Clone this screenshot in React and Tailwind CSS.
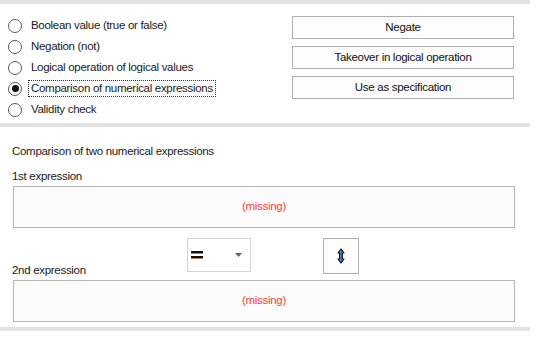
import { useState } from "react";

const options = [
  "Boolean value (true or false)",
  "Negation (not)",
  "Logical operation of logical values",
  "Comparison of numerical expressions",
  "Validity check",
];

function Radio({ label, checked, focused, onClick }) {
  return (
    <div className="flex items-center h-[21px] cursor-default" onClick={onClick}>
      <div className="ml-[8px] w-[14px] h-[14px] rounded-full border border-[#5a5a5a] bg-white flex items-center justify-center">
        {checked && <div className="w-[7px] h-[7px] rounded-full bg-[#111]" />}
      </div>
      <span
        className={
          "ml-[7px] px-[2px] leading-[15px] " +
          (focused ? "outline outline-1 outline-dotted outline-[#333]" : "")
        }
      >
        {label}
      </span>
    </div>
  );
}

function Button({ children }) {
  return (
    <button className="w-[222px] h-[23px] border border-[#adadad] bg-[#fdfdfd] text-[#111] leading-[21px]">
      {children}
    </button>
  );
}

function Missing() {
  return (
    <div className="w-[502px] h-[42px] border border-[#b4b4b4] bg-[#fcfcfc] flex items-center justify-center text-[#ff3b3b]">
      (missing)
    </div>
  );
}

export default function App() {
  const [selected, setSelected] = useState(3);

  return (
    <div
      className="w-[546px] h-[338px] bg-white text-[#1a1a1a] text-[11.5px] tracking-[-0.3px] overflow-hidden"
      style={{ fontFamily: '"Liberation Sans", Arial, sans-serif' }}
    >
      <div className="w-[530px] h-[4px] bg-[#e3e3e3]" />

      <div className="flex h-[119px]">
        <div className="w-[292px] pt-[11px]">
          {options.map((o, i) => (
            <Radio
              key={o}
              label={o}
              checked={selected === i}
              focused={selected === i}
              onClick={() => setSelected(i)}
            />
          ))}
        </div>
        <div className="flex flex-col gap-[7px] pt-[12px]">
          <Button>Negate</Button>
          <Button>Takeover in logical operation</Button>
          <Button>Use as specification</Button>
        </div>
      </div>

      <div className="w-[530px] h-[4px] bg-[#e3e3e3]" />

      <div className="pl-[12px]">
        <div className="mt-[17px] leading-[15px]">Comparison of two numerical expressions</div>
        <div className="mt-[10px] leading-[15px]">1st expression</div>
        <div className="mt-[2px] ml-[1px]">
          <Missing />
        </div>

        <div className="flex h-[42px] mt-[10px]">
          <div className="w-[175px] mt-[25px] leading-[15px]">2nd expression</div>
          <div className="w-[64px] h-[34px] border border-[#d4d4d4] bg-white flex items-center justify-between pl-[3px] pr-[8px]">
            <svg width="12" height="8" viewBox="0 0 12 8">
              <rect x="0" y="0" width="12" height="2.6" fill="#111" />
              <rect x="0" y="5" width="12" height="2.6" fill="#111" />
              <rect x="0" y="2.4" width="12" height="0.6" fill="#d98a3a" />
              <rect x="0" y="7.4" width="12" height="0.6" fill="#d98a3a" />
            </svg>
            <svg width="7" height="4" viewBox="0 0 7 4">
              <path d="M0 0 L7 0 L3.5 4 Z" fill="#666" />
            </svg>
          </div>
          <div className="ml-[72px] w-[36px] h-[36px] border border-[#adadad] bg-[#fdfdfd] flex items-center justify-center">
            <svg width="8" height="16" viewBox="0 0 8 16">
              <path
                d="M4 1 L7 5 L5.3 5 L5.3 11 L7 11 L4 15 L1 11 L2.7 11 L2.7 5 L1 5 Z"
                fill="#3a8ee0"
                stroke="#111"
                strokeWidth="1.2"
                strokeLinejoin="round"
              />
            </svg>
          </div>
        </div>

        <div className="ml-[1px]">
          <Missing />
        </div>
      </div>

      <div className="mt-[5px] w-[530px] h-[4px] bg-[#e3e3e3]" />
    </div>
  );
}
